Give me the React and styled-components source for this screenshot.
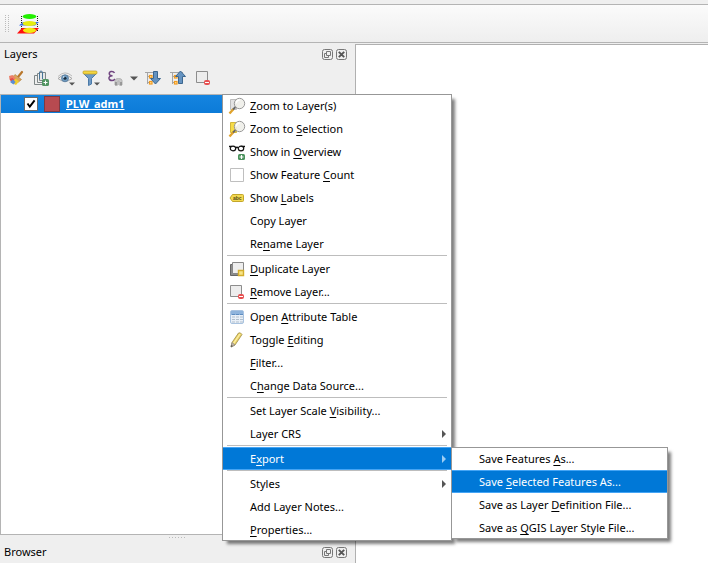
import React from "react";
import styled, { createGlobalStyle } from "styled-components";

const GlobalStyle = createGlobalStyle`
  * { box-sizing: border-box; }
  body {
    margin: 0;
    background: #efefef;
    color: #000;
    font: 11px/16px "Noto Sans", "Open Sans", sans-serif;
    overflow: hidden;
  }
  button, input { font: inherit; color: inherit; }
  svg { display: block; }
`;

const Window = styled.div`
  display: flex;
  flex-direction: column;
  height: 100vh;
  padding-top: 4px;
`;

const Toolbar = styled.header`
  display: flex;
  align-items: center;
  gap: 6px;
  height: 39px;
  padding-left: 5px;
  border-top: 1px solid #b4b4b4;
  border-bottom: 1px solid #b4b4b4;
  background: linear-gradient(#fbfbfb, #eeeeee);
`;

const IconButton = styled.button`
  display: flex;
  align-items: center;
  justify-content: center;
  width: ${(p) => p.$width || 25}px;
  height: 24px;
  padding: 0;
  border: 0;
  background: none;
`;

const Workspace = styled.div`
  display: flex;
  flex: 1;
  min-height: 0;
`;

const Docks = styled.aside`
  display: flex;
  flex-direction: column;
  flex: 0 0 355px;
`;

const DockTitle = styled.div`
  display: flex;
  align-items: center;
  gap: 3px;
  height: 22px;
  padding: 0 8px 0 4px;
`;

const Title = styled.h2`
  flex: 1;
  margin: 0;
  font-size: 11px;
  font-weight: 400;
`;

const DockButton = styled.button`
  width: 11px;
  height: 11px;
  padding: 0;
  border: 0;
  background: none;
`;

const LayerTools = styled.div`
  display: flex;
  align-items: center;
  height: 29px;
  padding: 0 0 3px 3px;
`;

const Tree = styled.ul`
  flex: 1;
  margin: 0;
  padding: 0;
  list-style: none;
  background: #fff;
  border: 1px solid #b4b4b4;
  border-right: 0;
`;

const LayerRow = styled.li`
  display: flex;
  align-items: center;
  height: 18px;
  padding-left: 23px;
  background: linear-gradient(#1584e0, #0c7bd8);
  color: #fff;
`;

const LayerLabel = styled.label`
  display: flex;
  align-items: center;
  gap: 6px;
  font-weight: 700;
  text-decoration: underline;
`;

const LayerCheck = styled.input`
  appearance: none;
  width: 14px;
  height: 14px;
  margin: 0;
  border: 1px solid #6b6b6b;
  background: #fff
    url("data:image/svg+xml,%3Csvg xmlns='http://www.w3.org/2000/svg' viewBox='0 0 12 12'%3E%3Cpath d='M2.5 5.5l2.3 3.2L9.6 2.4' fill='none' stroke='%23000' stroke-width='1.9'/%3E%3C/svg%3E")
    center / 12px no-repeat;
`;

const Swatch = styled.span`
  width: 16px;
  height: 16px;
  border: 1px solid #7c3a44;
  background: #b74a50;
`;

const Splitter = styled.div`
  display: flex;
  justify-content: center;
  height: 6px;
  padding-top: 2px;
`;

const Canvas = styled.main`
  flex: 1;
  margin-top: 1px;
  background: #fff;
  border-top: 1px solid #b0b0b0;
  border-left: 1px solid #b0b0b0;
`;

const MenuBox = styled.ul`
  position: absolute;
  left: ${(p) => p.$left};
  top: ${(p) => p.$top};
  width: ${(p) => p.$width}px;
  margin: 0;
  padding: 0;
  list-style: none;
  background: #fff;
  color: #000;
  border: 1px solid #979797;
  box-shadow: 4px 4px 3px -1px rgba(0, 0, 0, 0.5);
`;

const MenuEntry = styled.li`
  position: relative;
  &:first-child { margin-top: -1px; }
  &:last-child { margin-bottom: -1px; }
`;

const MenuButton = styled.button`
  display: flex;
  align-items: center;
  width: 100%;
  height: 23px;
  padding: 0 5px 0 ${(p) => (p.$sub ? 27 : 5)}px;
  border: 0;
  border-top: 1px solid ${(p) => (p.$active ? "#45a5f5" : "transparent")};
  border-bottom: 1px solid ${(p) => (p.$active ? "#45a5f5" : "transparent")};
  background: ${(p) => (p.$active ? "#0078d7" : "transparent")};
  color: ${(p) => (p.$active ? "#fff" : "#000")};
  text-align: left;
  white-space: nowrap;
`;

const MenuIcon = styled.span`
  width: 18px;
  height: 18px;
  margin-right: 4px;
  flex: none;
`;

const MenuText = styled.span`
  flex: 1;
  u { text-underline-offset: 2px; }
`;

const Separator = styled.li`
  height: 2px;
  margin: 0 4px;
  border-top: 1px solid #bdbdbd;
`;

const StackIcon = () => (
  <svg width="24" height="22" viewBox="0 0 24 22">
    <path d="M5.500 3v15M21.500 3v15" stroke="#222" strokeDasharray="1 1" />
    <ellipse cx="13.500" cy="3.500" rx="6.800" ry="2.400" fill="#22f000" />
    <path d="M3 12.500l4-3.500h16l-4 3.500z" fill="#2f66e8" />
    <ellipse cx="13.500" cy="10.500" rx="7" ry="2.600" fill="#e6ed10" />
    <path d="M1 20.500l5-5.500h17l-5 5.500z" fill="#ff1010" />
    <ellipse cx="13.500" cy="17.300" rx="6.500" ry="2.600" fill="#f2ea10" />
  </svg>
);

const GripIcon = () => (
  <svg width="4" height="17" viewBox="0 0 4 17">
    <path d="M.5 0v17M3.500 0v17" stroke="#bbb" strokeDasharray="1 1" />
  </svg>
);

const BrushIcon = () => (
  <svg width="16" height="16" viewBox="0 0 16 16">
    <path d="M14 2L10 7" stroke="#b9772c" strokeWidth="2.200" strokeLinecap="round" />
    <path d="M7 4.500l6.500 5-3 2.500-6-5z" fill="#d9a55d" stroke="#ad7731" strokeWidth=".6" />
    <path d="M5.500 6.500l5.500 5-3 3.500-4-2z" fill="#f1cc2e" />
    <path d="M1 6l3.500-1 3.500 3.500-4 2.500-2.500-2z" fill="#ed7f68" />
    <path d="M1.500 9l3-1 2 2-3 2.500z" fill="#e34a48" />
    <path d="M2 12l3-2.500 2.500 2.500-2 2.500z" fill="#5b8dd6" />
  </svg>
);

const AddGroupIcon = () => (
  <svg width="16" height="16" viewBox="0 0 16 16" fill="none" stroke="#7f8788">
    <path d="M4.500 5.500h-3v9h8" />
    <path d="M6.500 3.500h-2v9h5" />
    <path d="M6.500 2.500h6v8h-6z" fill="#e5e8e8" />
    <path d="M9.500 9V3q0-2-1.500-2T6.500 3v6" stroke="#497599" />
    <rect x="9" y="9" width="7" height="7" rx="1.500" fill="#529462" stroke="none" />
    <path d="M12.500 10.500v4M10.500 12.500h4" stroke="#fff" />
  </svg>
);

const Caret = () => <path d="M12 12.500h6l-3 3z" fill="#555" />;

const EyeIcon = () => (
  <svg width="18" height="17" viewBox="0 0 18 17">
    <path d="M1 8.500Q8 2 15 8.500 8 14 1 8.500z" fill="#f3f3f3" stroke="#a5a5a5" />
    <path d="M1 6.500Q8-.5 15 6" fill="none" stroke="#bcbcbc" />
    <circle cx="8" cy="8.300" r="3.500" fill="#6f9bc0" stroke="#55799a" strokeWidth=".8" />
    <circle cx="8" cy="8.300" r="1.500" fill="#172b3d" />
    <circle cx="6.700" cy="7" r=".8" fill="#e5f2ff" />
    <Caret />
  </svg>
);

const FilterIcon = () => (
  <svg width="18" height="17" viewBox="0 0 18 17">
    <path d="M1.500 3.500l5 5v7l3-1.500V8.500l5-5z" fill="#6f9ac4" stroke="#4b7aa8" />
    <rect x="1" y="1" width="14" height="3" rx="1" fill="#f3d641" stroke="#c19d21" strokeWidth=".7" />
    <Caret />
  </svg>
);

const ExpressionIcon = () => (
  <svg width="17" height="17" viewBox="0 0 17 17" fill="none">
    <path d="M7.500 3Q6.500 1 4 1.500 2 2 2.300 4 2.500 5.500 5.500 5.700 1.500 6 2 8.500q.5 2 3 2 2 0 3-1.500" stroke="#704680" strokeWidth="1.500" />
    <path d="M8 10.500q0-2 3.500-2t3.500 2V15h-3v-4h-1v4H8z" fill="#c9c9c9" stroke="#b3b3b3" />
    <path d="M9 12v3.500M14 12v3.500" stroke="#8b8b8b" strokeWidth="1.500" />
  </svg>
);

const DownCaret = () => (
  <svg width="8" height="5" viewBox="0 0 8 5">
    <path d="M0 .5h8L4 4.500z" fill="#555" />
  </svg>
);

const TreeArrowIcon = ({ up }) => (
  <svg width="17" height="16" viewBox="0 0 17 16" fill="none">
    <path d="M1 2.500h13M3.500 2v12M3.500 6.500h3M3.500 12.500h3" stroke="#a5a5a5" />
    <rect x="5.500" y="5.500" width="2.500" height="2.500" fill="#ffe5a1" stroke="#f29a1e" strokeWidth="1.200" />
    <rect x="5.500" y="11.500" width="2.500" height="2.500" fill="#ffe5a1" stroke="#f29a1e" strokeWidth="1.200" />
    <path
      d={up ? "M9.500 13.500V6.500H6.500L11.500 1l5 5.500h-3v7z" : "M9.500 1.500h4v7h3L11.500 14l-5-5.500h3z"}
      fill="#6593c1"
      stroke="#3c678f"
    />
  </svg>
);

const RemoveIcon = ({ size = 16 }) => (
  <svg width={size} height={size} viewBox={size === 18 ? "-1 -1 18 18" : "0 0 16 16"}>
    <path d="M1.500 1.500h11v11h-11z" fill="#ededed" stroke="#8d8d8d" />
    <rect x="9" y="10" width="6" height="5" rx="2" fill="#e74f50" />
    <path d="M10 12.500h4" stroke="#fff" />
  </svg>
);

const FloatIcon = () => (
  <svg width="11" height="11" viewBox="0 0 11 11" fill="none" stroke="#777">
    <rect x=".5" y=".5" width="10" height="10" rx="2" />
    <path d="M4.500 2.500h4v4h-4zM4 4.500H2.500v4h4V7" />
  </svg>
);

const CloseIcon = () => (
  <svg width="11" height="11" viewBox="0 0 11 11" fill="none" stroke="#777">
    <rect x=".5" y=".5" width="10" height="10" rx="2" />
    <path d="M2.800 2.800l5.400 5.400M8.200 2.800L2.800 8.200" stroke="#555" strokeWidth="1.900" />
  </svg>
);

const ZoomIcon = ({ fill, edge }) => (
  <svg width="18" height="18" viewBox="0 0 18 18">
    <path d="M2.500 2.500h6v10h-6z" fill={fill} stroke={edge} />
    <path d="M1.500 16.500L5.500 12" stroke="#e0a32c" strokeWidth="2.400" />
    <path d="M5 12.500L7.500 10" stroke="#666" strokeWidth="1.800" />
    <circle cx="11.500" cy="6.500" r="5.200" fill="#eeeee9" fillOpacity=".9" stroke="#9a9a9a" />
    <path d="M8.300 6.500q0-3.500 3.500-3.500" fill="none" stroke="#fff" strokeWidth="1.400" />
  </svg>
);

const GlassesIcon = () => (
  <svg width="18" height="18" viewBox="0 0 18 18" fill="none">
    <path d="M1 3.500h3M13 3.500h4M7.500 5q1.500-1.500 3 0" stroke="#111" strokeWidth="1.300" />
    <ellipse cx="5" cy="5.500" rx="2.700" ry="2.300" fill="#fff" stroke="#111" strokeWidth="1.200" />
    <ellipse cx="13" cy="5.500" rx="2.700" ry="2.300" fill="#fff" stroke="#111" strokeWidth="1.200" />
    <rect x="10" y="11" width="7" height="6" rx="1.500" fill="#4b925d" />
    <path d="M13.500 12v4M11.500 14h4" stroke="#fff" strokeWidth="1.200" />
  </svg>
);

const EmptyBoxIcon = () => (
  <svg width="18" height="18" viewBox="0 0 18 18">
    <path d="M2.500 2.500h13v13h-13z" fill="#fff" stroke="#bfbfbf" />
  </svg>
);

const LabelIcon = () => (
  <svg width="18" height="18" viewBox="0 0 18 18">
    <path d="M2 9l2.500-3.500h10q1 0 1 1v5q0 1-1 1h-10z" fill="#f3d950" stroke="#c3a629" />
    <text x="5" y="11" fontSize="5" fontWeight="700" fontFamily="Liberation Sans, sans-serif" fill="#544a18">abc</text>
  </svg>
);

const DuplicateIcon = () => (
  <svg width="18" height="18" viewBox="0 0 18 18">
    <path d="M2.500 4.500h9v11h-9z" fill="#8d8d8d" stroke="#666" />
    <path d="M4.500 2.500h11v11h-11z" fill="#eee" stroke="#888" />
    <path d="M10.500 10.500h5v5h-5z" fill="#f8e486" stroke="#d3ad2c" strokeWidth="1.400" />
  </svg>
);

const TableIcon = () => (
  <svg width="18" height="18" viewBox="0 0 18 18">
    <rect x="2.500" y="2.500" width="13" height="13" rx="1.500" fill="#e9f0f8" stroke="#a9c3e0" />
    <path d="M3 3h12v4H3z" fill="#8fb4dc" />
    <path d="M4 6.500h3M8 6.500h3M12 6.500h3" stroke="#5d8cc0" />
    <path d="M4 9h3M8 9h3M12 9h3M4 11.500h3M8 11.500h3M12 11.500h3M4 14h3M8 14h3M12 14h3" stroke="#b1bfcc" />
  </svg>
);

const PencilIcon = () => (
  <svg width="18" height="18" viewBox="0 0 18 18">
    <path d="M3 16l1-4.500L10.500 2q2-1 3.500 1.500L7 14z" fill="#ead36a" stroke="#9e8b42" strokeWidth=".8" />
    <path d="M5.500 12.500L12 3" stroke="#fff0a5" strokeWidth="1.300" />
    <path d="M3 16l1-4.500 3 2.500z" fill="#c8b8a8" stroke="#888" strokeWidth=".7" />
    <path d="M3 16l.5-2 1.300 1z" fill="#444" />
  </svg>
);

const SubmenuArrow = ({ active }) => (
  <svg width="4" height="8" viewBox="0 0 4 8">
    <path d="M0 0l4 4-4 4z" fill={active ? "#9ccdf4" : "#555"} />
  </svg>
);

const exportItems = [
  { text: "Save Features &As..." },
  { text: "Save &Selected Features As...", active: true },
  { text: "Save as Layer &Definition File..." },
  { text: "Save as &QGIS Layer Style File..." },
];

const contextItems = [
  { text: "&Zoom to Layer(s)", icon: <ZoomIcon fill="#e3e3e3" edge="#bdbdbd" /> },
  { text: "Zoom to &Selection", icon: <ZoomIcon fill="#f6dc49" edge="#d3b63a" /> },
  { text: "Show in &Overview", icon: <GlassesIcon /> },
  { text: "Show Feature &Count", icon: <EmptyBoxIcon /> },
  { text: "Show &Labels", icon: <LabelIcon /> },
  { text: "Copy Layer" },
  { text: "Re&name Layer" },
  null,
  { text: "&Duplicate Layer", icon: <DuplicateIcon /> },
  { text: "&Remove Layer...", icon: <RemoveIcon size={18} /> },
  null,
  { text: "Open &Attribute Table", icon: <TableIcon /> },
  { text: "Toggle &Editing", icon: <PencilIcon /> },
  { text: "&Filter..." },
  { text: "C&hange Data Source..." },
  null,
  { text: "Set Layer Scale &Visibility..." },
  { text: "Layer CRS", arrow: true },
  null,
  { text: "E&xport", arrow: true, active: true, items: exportItems },
  null,
  { text: "Styles", arrow: true },
  { text: "Add Layer Notes..." },
  { text: "&Properties..." },
];

function Mnemonic({ text }) {
  const at = text.indexOf("&");
  if (at < 0) return text;
  return (
    <>
      {text.slice(0, at)}
      <u>{text[at + 1]}</u>
      {text.slice(at + 2)}
    </>
  );
}

function Menu({ items, sub, label, ...place }) {
  return (
    <MenuBox role="menu" aria-label={label} {...place}>
      {items.map((item, i) =>
        item ? (
          <MenuEntry key={i} role="none">
            <MenuButton type="button" role="menuitem" $active={item.active} $sub={sub}>
              {!sub && <MenuIcon>{item.icon}</MenuIcon>}
              <MenuText><Mnemonic text={item.text} /></MenuText>
              {item.arrow && <SubmenuArrow active={item.active} />}
            </MenuButton>
            {item.items && (
              <Menu items={item.items} sub label="Export" $left="100%" $top="0" $width={217} />
            )}
          </MenuEntry>
        ) : (
          <Separator key={i} role="separator" />
        )
      )}
    </MenuBox>
  );
}

function DockHeader({ title }) {
  return (
    <DockTitle>
      <Title>{title}</Title>
      <DockButton type="button" aria-label={`Float ${title}`}><FloatIcon /></DockButton>
      <DockButton type="button" aria-label={`Close ${title}`}><CloseIcon /></DockButton>
    </DockTitle>
  );
}

const layerTools = [
  ["Open layer styling", <BrushIcon />],
  ["Add group", <AddGroupIcon />],
  ["Manage map themes", <EyeIcon />],
  ["Filter legend", <FilterIcon />],
  ["Filter by expression", <ExpressionIcon />],
  ["Expression options", <DownCaret />, 12],
  ["Expand all", <TreeArrowIcon />],
  ["Collapse all", <TreeArrowIcon up />],
  ["Remove layer", <RemoveIcon />],
];

export default function App() {
  return (
    <>
      <GlobalStyle />
      <Window>
        <Toolbar>
          <GripIcon />
          <IconButton type="button" aria-label="Layer stack"><StackIcon /></IconButton>
        </Toolbar>
        <Workspace>
          <Docks>
            <DockHeader title="Layers" />
            <LayerTools>
              {layerTools.map(([label, icon, width]) => (
                <IconButton key={label} type="button" aria-label={label} $width={width}>{icon}</IconButton>
              ))}
            </LayerTools>
            <Tree>
              <LayerRow>
                <LayerLabel>
                  <LayerCheck type="checkbox" defaultChecked />
                  <Swatch />
                  PLW_adm1
                </LayerLabel>
              </LayerRow>
            </Tree>
            <Splitter>
              <svg width="17" height="2" viewBox="0 0 17 2">
                <path d="M0 .5h17" stroke="#bbb" strokeDasharray="1 2" />
              </svg>
            </Splitter>
            <DockHeader title="Browser" />
          </Docks>
          <Canvas />
        </Workspace>
      </Window>
      <Menu items={contextItems} label="Layer" $left="222px" $top="94px" $width={230} />
    </>
  );
}
